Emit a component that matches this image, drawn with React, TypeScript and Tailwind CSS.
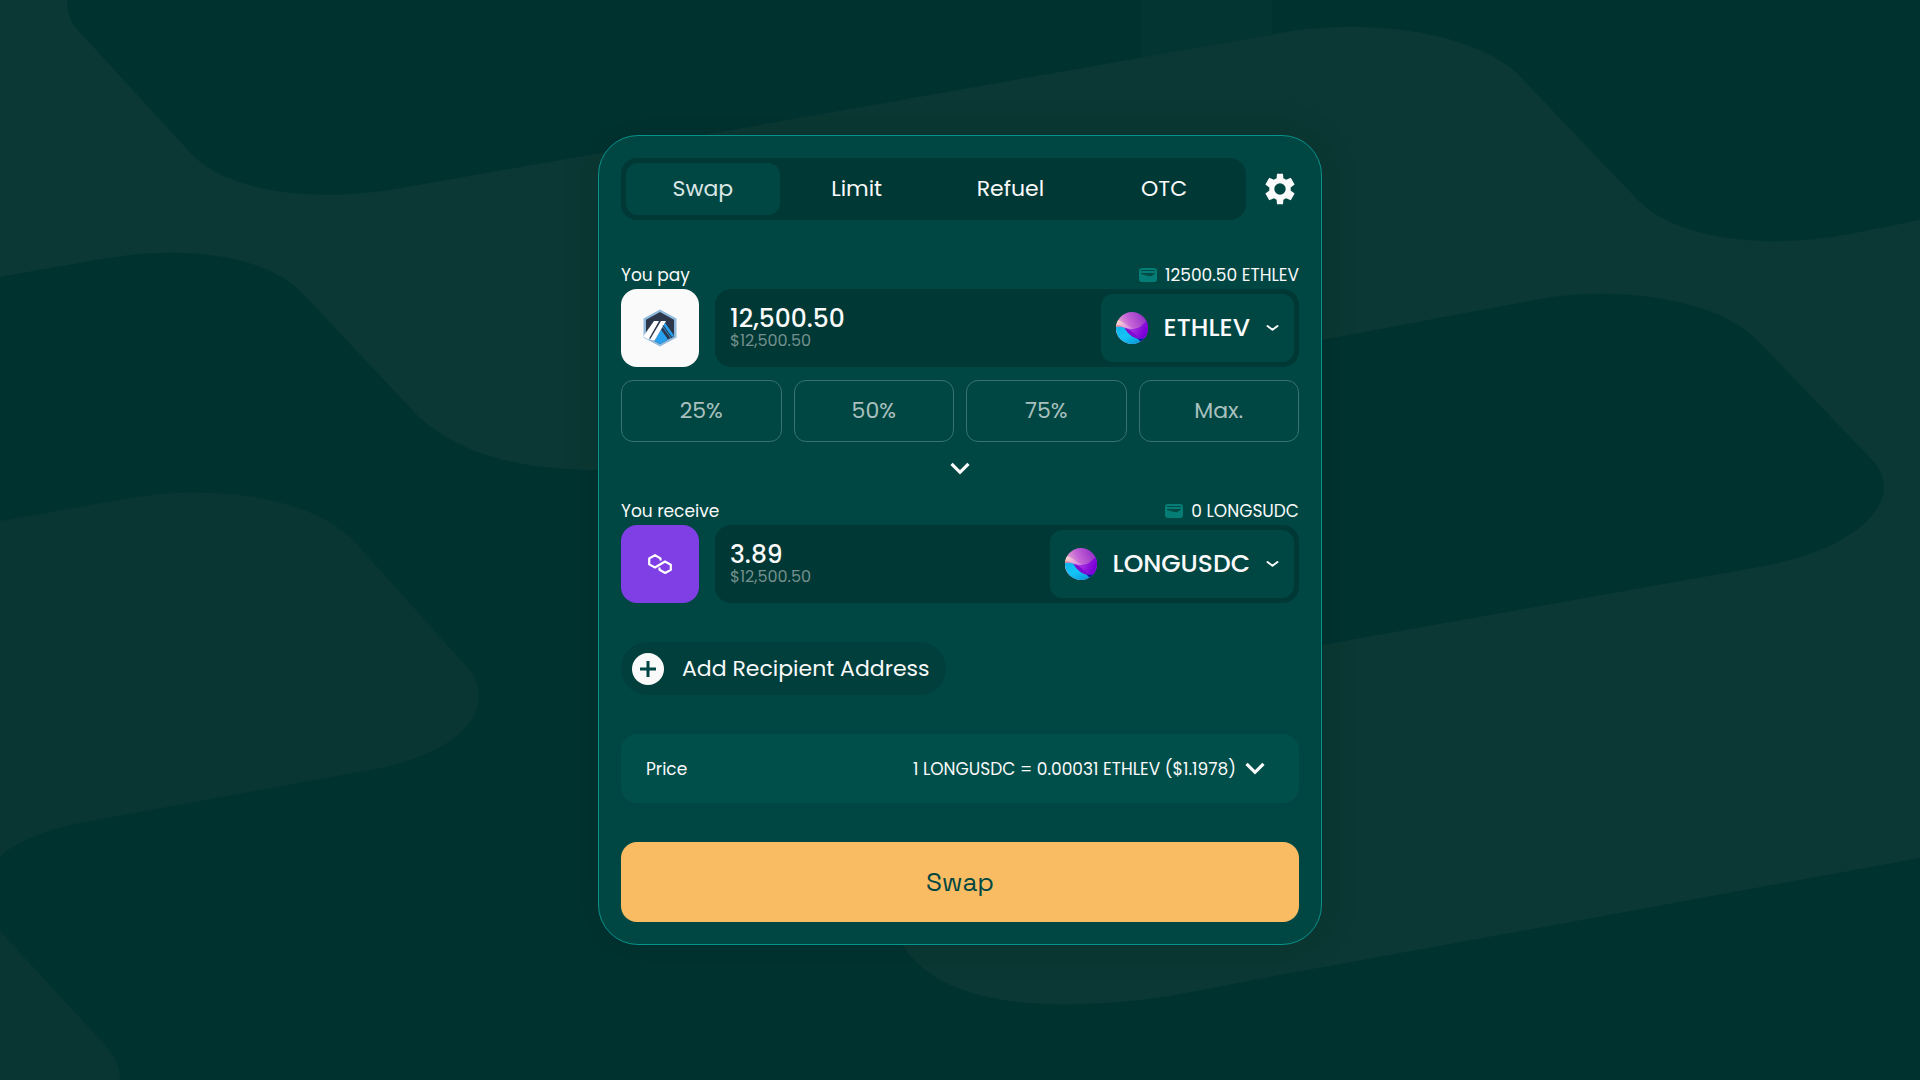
import React, { useState } from 'react';

const ChevronDown = ({ className }: { className: string }) => (
  <svg className={className} viewBox="0 0 18 12" fill="none" stroke="currentColor" strokeWidth="3" aria-hidden="true">
    <path d="M1.200 1.800 L9 9.500 L16.800 1.800" />
  </svg>
);

const SmallChevron = () => (
  <svg className="ml-4 h-2 w-[13px]" viewBox="0 0 13 8" fill="none" stroke="currentColor" strokeWidth="2" strokeLinecap="round" strokeLinejoin="round" aria-hidden="true">
    <path d="M1.500 2 L6.500 5.800 L11.500 2" />
  </svg>
);

const WalletIcon = () => (
  <svg className="h-[14px] w-[18px]" viewBox="0 0 18 14" aria-hidden="true">
    <rect width="18" height="14" rx="3" fill="#047d76" />
    <path d="M2 2.500h14" stroke="#024a45" strokeWidth="1" />
    <path d="M2 5h14v1c-2 0-2 2.200-4.500 2.200C8.500 8.200 6 6.600 2 6.200z" fill="#024a45" />
  </svg>
);

const CoinIcon = () => (
  <svg className="h-8 w-8 shrink-0" viewBox="0 0 32 32" aria-hidden="true">
    <defs>
      <clipPath id="coin-clip"><circle cx="16" cy="16" r="16" /></clipPath>
      <linearGradient id="coin-top" x1="0" y1="0.700" x2="1" y2="0.200">
        <stop offset="0" stopColor="#fbd0cc" />
        <stop offset="0.500" stopColor="#c564d6" />
        <stop offset="1" stopColor="#8d2ac4" />
      </linearGradient>
      <linearGradient id="coin-mid" x1="0" y1="0" x2="1" y2="0.300">
        <stop offset="0" stopColor="#ffe0c8" />
        <stop offset="0.450" stopColor="#dc94e2" />
        <stop offset="1" stopColor="#9a1fe0" />
      </linearGradient>
      <linearGradient id="coin-low" x1="0" y1="0" x2="1" y2="0.300">
        <stop offset="0" stopColor="#ff9a6b" />
        <stop offset="0.300" stopColor="#d77fe0" />
        <stop offset="0.600" stopColor="#a52be0" />
        <stop offset="1" stopColor="#7a00d8" />
      </linearGradient>
      <linearGradient id="coin-sea" x1="0" y1="0" x2="0.800" y2="1">
        <stop offset="0" stopColor="#0fb4ec" />
        <stop offset="0.500" stopColor="#14c4f5" />
        <stop offset="1" stopColor="#0593d6" />
      </linearGradient>
    </defs>
    <g clipPath="url(#coin-clip)">
      <rect width="32" height="32" fill="url(#coin-top)" />
      <path d="M0 8c8 0 11 8 19 8.500 4 0 6-1.500 8-3.500l5 5v8H0z" fill="url(#coin-mid)" />
      <path d="M0 12.500c5 .5 8 3.500 13 4.200 6 .800 11-.700 14-4.700l5-4v20H0z" fill="url(#coin-low)" />
      <path d="M0 15c3-.5 6-.3 9 1 6 3 10 10 19 11l4 1v4H0z" fill="url(#coin-sea)" />
      <path d="M8.500 16c8 1 11 10 19 11-8 1.500-15-4-19-11z" fill="#7d0bd2" />
      <path d="M21.500 26.500c4 .7 7 0 10-1.500L26 31z" fill="#10139c" />
    </g>
  </svg>
);

const ArbitrumIcon = () => (
  <svg className="h-[38px] w-[36px]" viewBox="0 0 36 38" aria-hidden="true">
    <path d="M18 .5 L34.500 9.500 V28.500 L18 37.500 L1.500 28.500 V9.500 Z" fill="#8fb9dc" />
    <path d="M18 3 L32 10.800 V27.200 L18 35 L4 27.200 V10.800 Z" fill="#2d374b" />
    <path d="M20.500 18 23 13.800 32 26.500 28.500 29z" fill="#28a0f0" />
    <path d="M19 20.500 26 30.500 18 35 12.500 31.800z" fill="#28a0f0" />
    <path d="M12 12h5L6.500 30.500 1.500 27.800V27z" fill="#ffffff" />
    <path d="M19 12h5L12.500 31.800 8 30.500z" fill="#ffffff" />
    <path d="M21 16.500 30 29" stroke="#2d374b" strokeWidth="1.200" />
  </svg>
);

const PolygonIcon = () => (
  <svg className="h-5 w-6" viewBox="0 0 24 20" fill="none" stroke="#ffffff" strokeWidth="2.200" strokeLinejoin="round" aria-hidden="true">
    <path d="M12.500 6.500V4.400L7 1.200 1.200 4.400v6L7 13.500l10-6 5.800 3.200v5.200L17.200 19l-5.700-3.200v-2.300" />
  </svg>
);

const GearIcon = () => (
  <svg className="h-[38px] w-[38px]" viewBox="0 0 24 24" fill="currentColor" aria-hidden="true">
    <path d="M18.700 12.990c.040-.320.070-.650.070-.990 0-.340-.030-.660-.070-.990l2.540-1.900-2.430-4.220-2.970 1.260c-.520-.400-1.090-.740-1.710-1L13.900 2.300H10.100L9.870 5.150c-.620.260-1.190.600-1.710 1L5.190 4.890 2.760 9.110l2.540 1.900c-.040.330-.070.650-.070.990 0 .340.030.670.070.990l-2.540 1.900 2.430 4.220 2.970-1.260c.520.400 1.090.740 1.710 1l.230 2.850h3.800l.230-2.850c.620-.260 1.190-.600 1.710-1l2.970 1.260 2.430-4.220-2.540-1.900zM12 15.600a3.600 3.600 0 1 1 0-7.200 3.600 3.600 0 0 1 0 7.200z" />
  </svg>
);

const Backdrop = () => (
  <svg className="absolute inset-0 h-full w-full" viewBox="0 0 1920 1080" preserveAspectRatio="xMidYMid slice" aria-hidden="true">
    <rect width="1920" height="1080" fill="#003330" />
    <rect x="1142" width="130" height="75" fill="#033533" />
    <path
      fill="#0b3834"
      d="M0 0H67C67 10 69 19 76 28L186 148C222 192 306 202 390 190L1270 35C1350 18 1460 26 1516 72L1634 196C1672 240 1766 250 1850 234L1920 220V858L1280 975L1170 996C1060 1012 944 1010 903 946L850 860L900 720L1322 645L1770 565C1852 548 1906 504 1875 463L1759 342C1720 300 1625 286 1545 298L1322 340L900 440L598 470C530 470 460 458 415 413L305 296C265 252 180 245 95 260L0 277Z"
    />
    <path
      fill="#093532"
      d="M0 521L130 498C210 484 310 496 353 540L468 668C500 708 460 755 370 770L80 823C45 830 15 842 0 857Z"
    />
    <path fill="#093532" d="M0 931L105 1045C116 1057 120 1068 120 1080H0Z" />
  </svg>
);

interface TokenFieldProps {
  id: string;
  label: string;
  balance: string;
  amount: string;
  token: string;
  chain: string;
  chainColor: string;
  chainIcon: React.ReactNode;
}

const TokenField: React.FC<TokenFieldProps> = ({ id, label, balance, amount, token, chain, chainColor, chainIcon }) => {
  const [value, setValue] = useState(amount);

  return (
    <div>
      <div className="flex h-[30px] items-center justify-between pt-0.5 text-[17px] leading-6">
        <label htmlFor={id}>{label}</label>
        <span className="flex items-center gap-2">
          <WalletIcon />
          {balance}
        </span>
      </div>
      <div className="flex gap-4">
        <button aria-label={chain} className={`flex h-[78px] w-[78px] shrink-0 items-center justify-center rounded-2xl ${chainColor}`}>
          {chainIcon}
        </button>
        <div className="flex h-[78px] min-w-0 flex-1 rounded-2xl bg-[#003835] p-[5px]">
          <div className="flex min-w-0 flex-1 flex-col justify-center pb-0.5 pl-[10px]">
            <input
              id={id}
              value={value}
              onChange={(e) => setValue(e.target.value)}
              className="h-7 w-full bg-transparent text-[25px] font-medium outline-none"
            />
            <span className="text-[16px] leading-4 text-[#74908e]">$12,500.50</span>
          </div>
          <button className="flex items-center rounded-xl bg-[#004743] pr-[15px] pl-[15px] text-[25px] font-medium">
            <CoinIcon />
            <span className="ml-4">{token}</span>
            <SmallChevron />
          </button>
        </div>
      </div>
    </div>
  );
};

const TABS = ['Swap', 'Limit', 'Refuel', 'OTC'];
const SHARES = ['25%', '50%', '75%', 'Max.'];

export default function App() {
  const [tab, setTab] = useState('Swap');

  return (
    <main className="relative flex min-h-screen items-center justify-center overflow-hidden bg-[#003330] font-['Poppins','Inter',sans-serif] text-[#fafafa]">
      <Backdrop />

      <section className="relative w-full max-w-[724px] rounded-[40px] border border-[#07928a] bg-[#004743] p-[22px] shadow-[0_0_40px_rgba(0,0,0,0.12)]">
        {/* Tabs */}
        <div className="flex items-center justify-between">
          <nav className="grid h-[62px] w-[625px] grid-cols-4 rounded-2xl bg-[#003835] p-[5px]">
            {TABS.map((name) => (
              <button
                key={name}
                onClick={() => setTab(name)}
                className={`rounded-xl text-[22px] leading-8 ${tab === name ? 'bg-[#004743] text-[#dce6e5]' : ''}`}
              >
                {name}
              </button>
            ))}
          </nav>
          <button aria-label="Settings">
            <GearIcon />
          </button>
        </div>

        {/* Pay */}
        <div className="mt-[39px]">
          <TokenField
            id="pay"
            label="You pay"
            balance="12500.50 ETHLEV"
            amount="12,500.50"
            token="ETHLEV"
            chain="Arbitrum"
            chainColor="bg-[#fafafa]"
            chainIcon={<ArbitrumIcon />}
          />
        </div>
        <div className="mt-[13px] grid grid-cols-4 gap-3">
          {SHARES.map((share) => (
            <button key={share} className="h-[62px] rounded-xl border border-[#397370] text-[22px] leading-8 text-[#a9c0be]">
              {share}
            </button>
          ))}
        </div>

        <button aria-label="Switch direction" className="mx-auto mt-4 flex h-5 items-center">
          <ChevronDown className="h-[13px] w-5" />
        </button>

        {/* Receive */}
        <div className="mt-[17px]">
          <TokenField
            id="receive"
            label="You receive"
            balance="0 LONGSUDC"
            amount="3.89"
            token="LONGUSDC"
            chain="Polygon"
            chainColor="bg-[#7f3fe4]"
            chainIcon={<PolygonIcon />}
          />
        </div>

        <button className="mt-[39px] flex h-[53px] items-center gap-[18px] rounded-full bg-[#013f3c] pr-4 pl-[11px] text-[22px]">
          <svg className="h-8 w-8" viewBox="0 0 32 32" aria-hidden="true">
            <circle cx="16" cy="16" r="16" fill="#fafafa" />
            <path d="M16 8v16M8 16h16" stroke="#004743" strokeWidth="3" />
          </svg>
          Add Recipient Address
        </button>

        {/* Price */}
        <button className="mt-[39px] flex h-[69px] w-full items-center justify-between rounded-2xl bg-[#004f4b] pr-[34px] pl-[25px] text-[17px] leading-6">
          <span>Price</span>
          <span className="flex items-center gap-[9px]">
            1 LONGUSDC = 0.00031 ETHLEV ($1.1978)
            <ChevronDown className="h-[13px] w-5" />
          </span>
        </button>

        <button className="mt-[39px] h-20 w-full rounded-2xl bg-[#f9bc62] font-['Space_Grotesk','Inter',sans-serif] text-[26px] text-[#004743]">
          Swap
        </button>
      </section>
    </main>
  );
}
